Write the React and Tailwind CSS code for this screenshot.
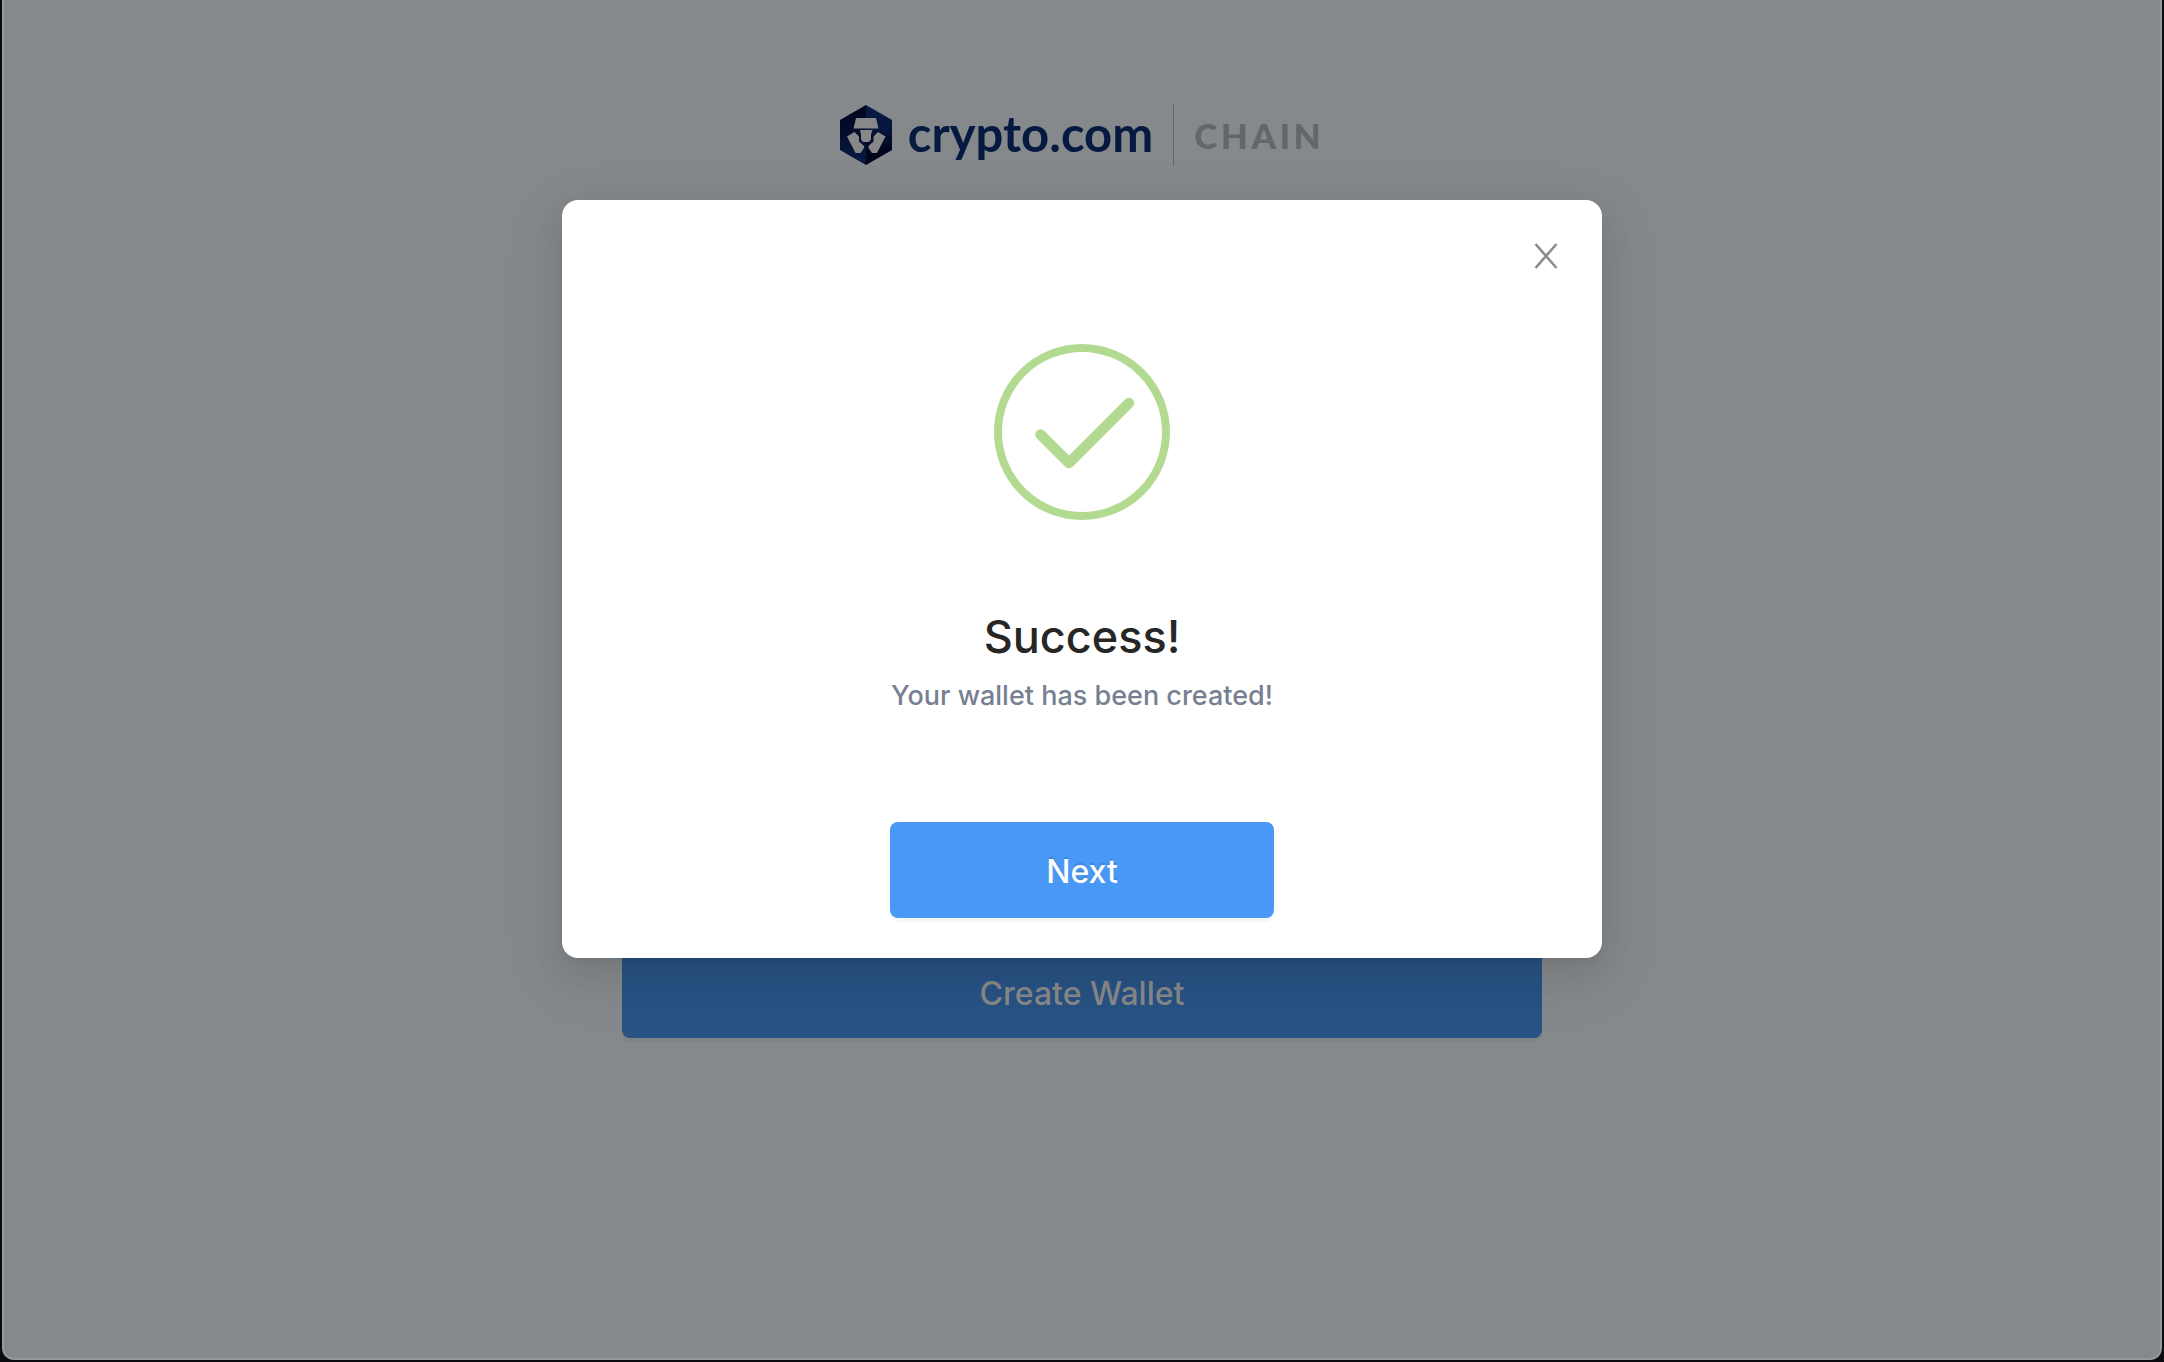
function Logo() {
  return (
    <div className="flex items-center">
      <svg className="h-[60px] w-[52px]" viewBox="0 0 52 60" aria-label="Crypto.com logo" role="img">
        <defs>
          <linearGradient id="left" x1="0" y1="0" x2="0" y2="1">
            <stop offset="0" stopColor="#01041a" />
            <stop offset="1" stopColor="#071a44" />
          </linearGradient>
          <linearGradient id="right" x1="0" y1="0" x2="0" y2="1">
            <stop offset="0" stopColor="#061a45" />
            <stop offset="0.4" stopColor="#06163c" />
            <stop offset="0.8" stopColor="#01041a" />
          </linearGradient>
        </defs>
        <path d="M26 0v60L0 45V15z" fill="url(#left)" />
        <path d="M26 0v60l26-15V15z" fill="url(#right)" />
        <g fill="#888888">
          <path d="M16 13h20l2.500 10.500h-25z" />
          <path d="M20 25h12.500l-1.500 4.500v5L29 37h-6l-2-2.500v-5z" />
          <path d="M14.500 27L7 31.500l8.500 16.500h5L24 43v-2l-5-4.500v-5z" />
          <path d="M38 27l7.500 4.500L37 48h-5l-3.500-5v-2l5-4.500v-5z" />
        </g>
      </svg>
      <span className="ml-4 pb-1 font-['Lato'] text-[49px] leading-[56px] font-bold text-[#051941]">crypto.com</span>
      <span className="ml-5 h-[62px] w-px bg-[#67696a]" />
      <span className="ml-5 font-['Lato'] text-[35px] leading-[60px] font-black tracking-widest text-[#656667]">CHAIN</span>
    </div>
  );
}

function WelcomePage() {
  return (
    <div className="flex h-full flex-col items-center pt-[104px]">
      <Logo />
      <button
        type="button"
        className="mt-[776px] h-24 w-[920px] rounded-lg bg-[#285283] pt-2 text-[32px] font-medium text-[#888888] shadow-[0_4px_0_rgba(0,0,0,0.04)]"
      >
        Create Wallet
      </button>
    </div>
  );
}

function SuccessDialog() {
  return (
    <section
      role="dialog"
      aria-labelledby="dialog-title"
      className="absolute inset-x-0 top-[200px] mx-auto flex w-[1040px] flex-col items-center rounded-2xl bg-white px-9 py-10 shadow-[0_6px_12px_-8px_rgba(0,0,0,0.12),0_12px_32px_rgba(0,0,0,0.08),0_18px_56px_16px_rgba(0,0,0,0.05)]"
    >
      <button type="button" aria-label="Close" className="-mt-1 self-end p-1 text-[#8c8c8c]">
        <svg className="h-8 w-8" viewBox="0 0 32 32" fill="none" stroke="currentColor" strokeWidth="2.600">
          <path d="M5.500 4L26.500 28M26.500 4L5.500 28" />
        </svg>
      </button>
      <svg className="mt-[68px] h-44 w-44" viewBox="0 0 176 176" fill="none" stroke="#b2da91" aria-hidden="true">
        <circle cx="88" cy="88" r="84" strokeWidth="8" />
        <path d="M46.500 90.500L75 119l60-60" strokeWidth="10.500" strokeLinecap="round" strokeLinejoin="round" />
      </svg>
      <h1 id="dialog-title" className="mt-[84px] text-[45px] leading-[66px] font-medium text-[#262626]">Success!</h1>
      <p className="mt-[6px] text-[27px] leading-10 font-medium text-[#777f93]">Your wallet has been created!</p>
      <button
        type="button"
        className="mt-[106px] h-24 w-96 rounded-lg bg-[#4998f5] pt-1 text-[32px] font-medium text-white shadow-[0_4px_0_rgba(0,0,0,0.03)] [text-shadow:0_-2px_0_rgba(0,0,0,0.12)]"
      >
        Next
      </button>
    </section>
  );
}

export default function App() {
  return (
    <div className="h-screen overflow-hidden bg-[#0b0c10] px-[2px] pb-[2px] font-['Inter',sans-serif]">
      <main className="relative h-full overflow-hidden rounded-b-xl border-x-2 border-b-2 border-[#96999a] bg-[#85898b]">
        <WelcomePage />
        <SuccessDialog />
      </main>
    </div>
  );
}
